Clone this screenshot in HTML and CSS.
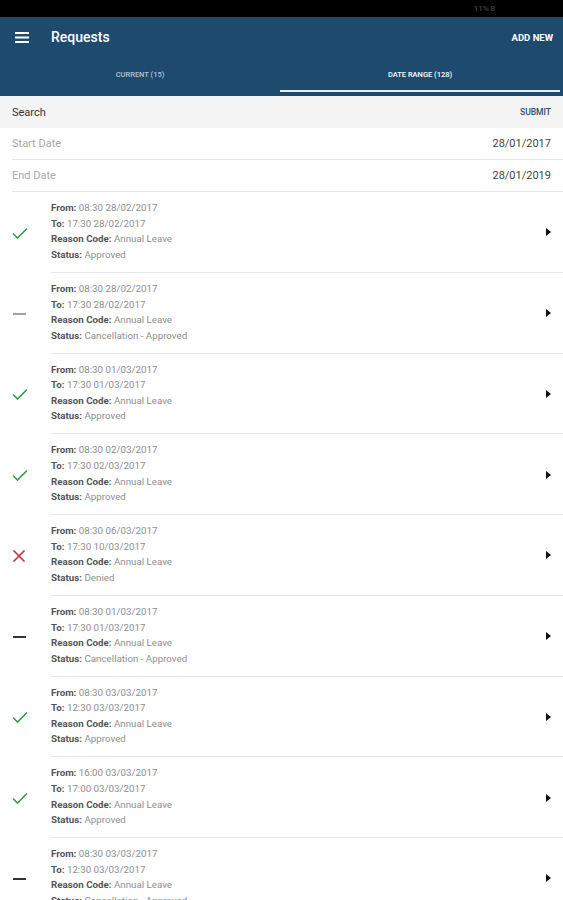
FILE: index.html
```html
<!DOCTYPE html>
<html>
<head>
<meta charset="utf-8">
<link rel="stylesheet" href="styles.css">
</head>
<body>
<div class="statusbar"><span class="status-text">11% 8</span></div>
<header class="appbar">
  <div class="toolbar">
    <svg class="menu" width="14" height="11" viewBox="0 0 14 11"><rect x="0" y="0" width="14" height="2" fill="#fff"/><rect x="0" y="4.5" width="14" height="2" fill="#fff"/><rect x="0" y="9" width="14" height="2" fill="#fff"/></svg>
    <span class="title">Requests</span>
    <span class="add">ADD NEW</span>
  </div>
  <div class="tabs">
    <div class="tab">CURRENT (15)</div>
    <div class="tab active">DATE RANGE (128)</div>
  </div>
</header>
<div class="searchbar"><span>Search</span><span class="submit">SUBMIT</span></div>
<div class="daterow"><span class="dlabel">Start Date</span><span class="dval">28/01/2017</span></div>
<div class="daterow"><span class="dlabel">End Date</span><span class="dval">28/01/2019</span></div>
<ul class="list">
  <li class="item"><div class="ico"><svg width="16" height="12" viewBox="0 0 16 12"><path d="M1 6.5 L5.5 11 L15 1.5" fill="none" stroke="#2e9a4a" stroke-width="1.6"/></svg></div><div class="txt"><div><b>From:</b> 08:30 28/02/2017</div><div><b>To:</b> 17:30 28/02/2017</div><div><b>Reason Code:</b> Annual Leave</div><div><b>Status:</b> Approved</div></div><div class="arr"></div></li>
  <li class="item"><div class="ico"><span class="dash light"></span></div><div class="txt"><div><b>From:</b> 08:30 28/02/2017</div><div><b>To:</b> 17:30 28/02/2017</div><div><b>Reason Code:</b> Annual Leave</div><div><b>Status:</b> Cancellation - Approved</div></div><div class="arr"></div></li>
  <li class="item"><div class="ico"><svg width="16" height="12" viewBox="0 0 16 12"><path d="M1 6.5 L5.5 11 L15 1.5" fill="none" stroke="#2e9a4a" stroke-width="1.6"/></svg></div><div class="txt"><div><b>From:</b> 08:30 01/03/2017</div><div><b>To:</b> 17:30 01/03/2017</div><div><b>Reason Code:</b> Annual Leave</div><div><b>Status:</b> Approved</div></div><div class="arr"></div></li>
  <li class="item"><div class="ico"><svg width="16" height="12" viewBox="0 0 16 12"><path d="M1 6.5 L5.5 11 L15 1.5" fill="none" stroke="#2e9a4a" stroke-width="1.6"/></svg></div><div class="txt"><div><b>From:</b> 08:30 02/03/2017</div><div><b>To:</b> 17:30 02/03/2017</div><div><b>Reason Code:</b> Annual Leave</div><div><b>Status:</b> Approved</div></div><div class="arr"></div></li>
  <li class="item"><div class="ico"><svg width="14" height="12" viewBox="0 0 14 12"><path d="M1.5 0.5 L12.5 11.5 M12.5 0.5 L1.5 11.5" fill="none" stroke="#c8323a" stroke-width="1.6"/></svg></div><div class="txt"><div><b>From:</b> 08:30 06/03/2017</div><div><b>To:</b> 17:30 10/03/2017</div><div><b>Reason Code:</b> Annual Leave</div><div><b>Status:</b> Denied</div></div><div class="arr"></div></li>
  <li class="item"><div class="ico"><span class="dash"></span></div><div class="txt"><div><b>From:</b> 08:30 01/03/2017</div><div><b>To:</b> 17:30 01/03/2017</div><div><b>Reason Code:</b> Annual Leave</div><div><b>Status:</b> Cancellation - Approved</div></div><div class="arr"></div></li>
  <li class="item"><div class="ico"><svg width="16" height="12" viewBox="0 0 16 12"><path d="M1 6.5 L5.5 11 L15 1.5" fill="none" stroke="#2e9a4a" stroke-width="1.6"/></svg></div><div class="txt"><div><b>From:</b> 08:30 03/03/2017</div><div><b>To:</b> 12:30 03/03/2017</div><div><b>Reason Code:</b> Annual Leave</div><div><b>Status:</b> Approved</div></div><div class="arr"></div></li>
  <li class="item"><div class="ico"><svg width="16" height="12" viewBox="0 0 16 12"><path d="M1 6.5 L5.5 11 L15 1.5" fill="none" stroke="#2e9a4a" stroke-width="1.6"/></svg></div><div class="txt"><div><b>From:</b> 16:00 03/03/2017</div><div><b>To:</b> 17:00 03/03/2017</div><div><b>Reason Code:</b> Annual Leave</div><div><b>Status:</b> Approved</div></div><div class="arr"></div></li>
  <li class="item"><div class="ico"><span class="dash"></span></div><div class="txt"><div><b>From:</b> 08:30 03/03/2017</div><div><b>To:</b> 12:30 03/03/2017</div><div><b>Reason Code:</b> Annual Leave</div><div><b>Status:</b> Cancellation - Approved</div></div><div class="arr"></div></li>
</ul>
</body>
</html>
```
FILE: styles.css
```css
* { box-sizing: border-box; }
html, body { margin: 0; padding: 0; }
body {
  width: 563px;
  height: 900px;
  overflow: hidden;
  background: #fff;
  font-family: Roboto, "Liberation Sans", sans-serif;
}
.statusbar {
  height: 17px;
  background: #000;
  display: flex;
  justify-content: flex-end;
  align-items: center;
  padding-right: 68px;
}
.status-text { color: #555; font-size: 8px; }
.appbar { background: #1e4a6e; height: 79px; display: flex; flex-direction: column; }
.toolbar {
  height: 40px;
  display: flex;
  align-items: center;
  padding: 0 10px 0 15px;
}
.menu { display: block; }
.title { color: #fff; font-weight: 500; font-size: 14px; margin-left: 22px; flex: 1; }
.add { color: #fff; font-weight: 700; font-size: 9.5px; }
.tabs { display: flex; height: 39px; }
.tab {
  flex: 1;
  display: flex;
  align-items: center;
  justify-content: center;
  color: #b4c3d1;
  font-size: 7.5px;
  font-weight: 500;
  padding-top: 1px;
  border-bottom: 2px solid transparent;
  margin-bottom: 4px;
}
.tab.active { color: #fff; border-bottom-color: #e6eef6; margin-right: 3px; }
.searchbar {
  height: 32px;
  background: #f4f4f4;
  display: flex;
  align-items: center;
  justify-content: space-between;
  padding: 0 12px;
  font-size: 11px;
  color: #333;
}
.submit { color: #2b4f6e; font-size: 8.5px; font-weight: 500; }
.daterow {
  height: 32px;
  margin-left: 12px;
  padding-right: 12px;
  display: flex;
  align-items: center;
  justify-content: space-between;
  border-bottom: 1px solid #e6e6e6;
  font-size: 11px;
}
.dlabel { color: #a8a8a8; }
.dval { color: #444; }
.list { list-style: none; margin: 0; padding: 0; }
.item {
  height: 80.75px;
  display: flex;
  align-items: center;
  position: relative;
}
.item::after {
  content: "";
  position: absolute;
  left: 51px;
  right: 0;
  bottom: 0;
  height: 1px;
  background: #e8e8e8;
}
.ico { width: 51px; display: flex; align-items: center; padding-left: 12px; padding-top: 1px; }
.ico svg { display: block; }
.dash { display: block; width: 13px; height: 2px; background: #333; margin-left: 1px; }
.dash.light { background: #a0a0a0; }
.txt { flex: 1; font-size: 9.75px; line-height: 15.6px; color: #8e8e8e; padding-bottom: 2px; }
.txt b { color: #555; font-weight: 700; }
.arr {
  width: 0; height: 0;
  border-top: 4px solid transparent;
  border-bottom: 4px solid transparent;
  border-left: 5px solid #111;
  margin-right: 12px;
}
```
